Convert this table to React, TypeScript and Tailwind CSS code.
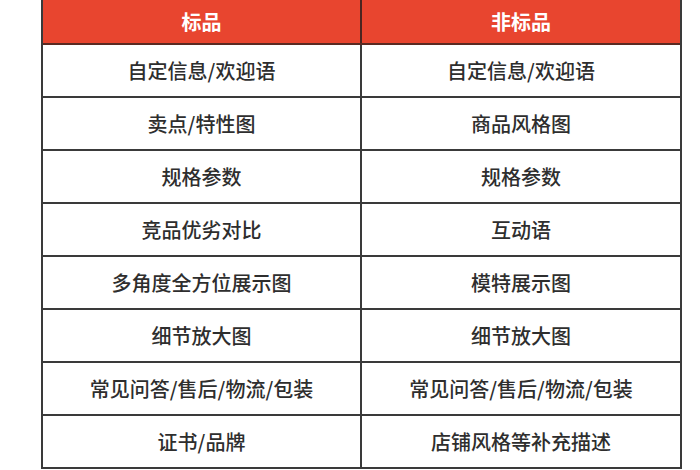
import React from 'react';

const rows: [string, string][] = [
  ['自定信息/欢迎语', '自定信息/欢迎语'],
  ['卖点/特性图', '商品风格图'],
  ['规格参数', '规格参数'],
  ['竞品优劣对比', '互动语'],
  ['多角度全方位展示图', '模特展示图'],
  ['细节放大图', '细节放大图'],
  ['常见问答/售后/物流/包装', '常见问答/售后/物流/包装'],
  ['证书/品牌', '店铺风格等补充描述'],
];

export default function App() {
  return (
    <div
      className="w-[700px] h-[470px] bg-white overflow-hidden"
      style={{ fontFamily: '"Noto Sans CJK SC", "Liberation Sans", sans-serif' }}
    >
      <div className="ml-[41px] w-[641px] border-x-2 border-[#3a3a3a]">
        {/* Header */}
        <div className="grid grid-cols-[319px_1fr] h-[45px] bg-[#e8452f] border-b-2 border-[#5a2a22]">
          <div className="flex items-center justify-center border-r-2 border-[#4a2520] text-white text-[20px] font-bold">
            标品
          </div>
          <div className="flex items-center justify-center text-white text-[20px] font-bold">
            非标品
          </div>
        </div>

        {/* Body */}
        {rows.map(([a, b], i) => (
          <div
            key={i}
            className="grid grid-cols-[319px_1fr] h-[53px] border-b-2 border-[#3a3a3a]"
          >
            <div className="flex items-center justify-center border-r-2 border-[#3a3a3a] text-[#2e2e2e] text-[20px] font-medium">
              {a}
            </div>
            <div className="flex items-center justify-center text-[#2e2e2e] text-[20px] font-medium">
              {b}
            </div>
          </div>
        ))}
      </div>
    </div>
  );
}
